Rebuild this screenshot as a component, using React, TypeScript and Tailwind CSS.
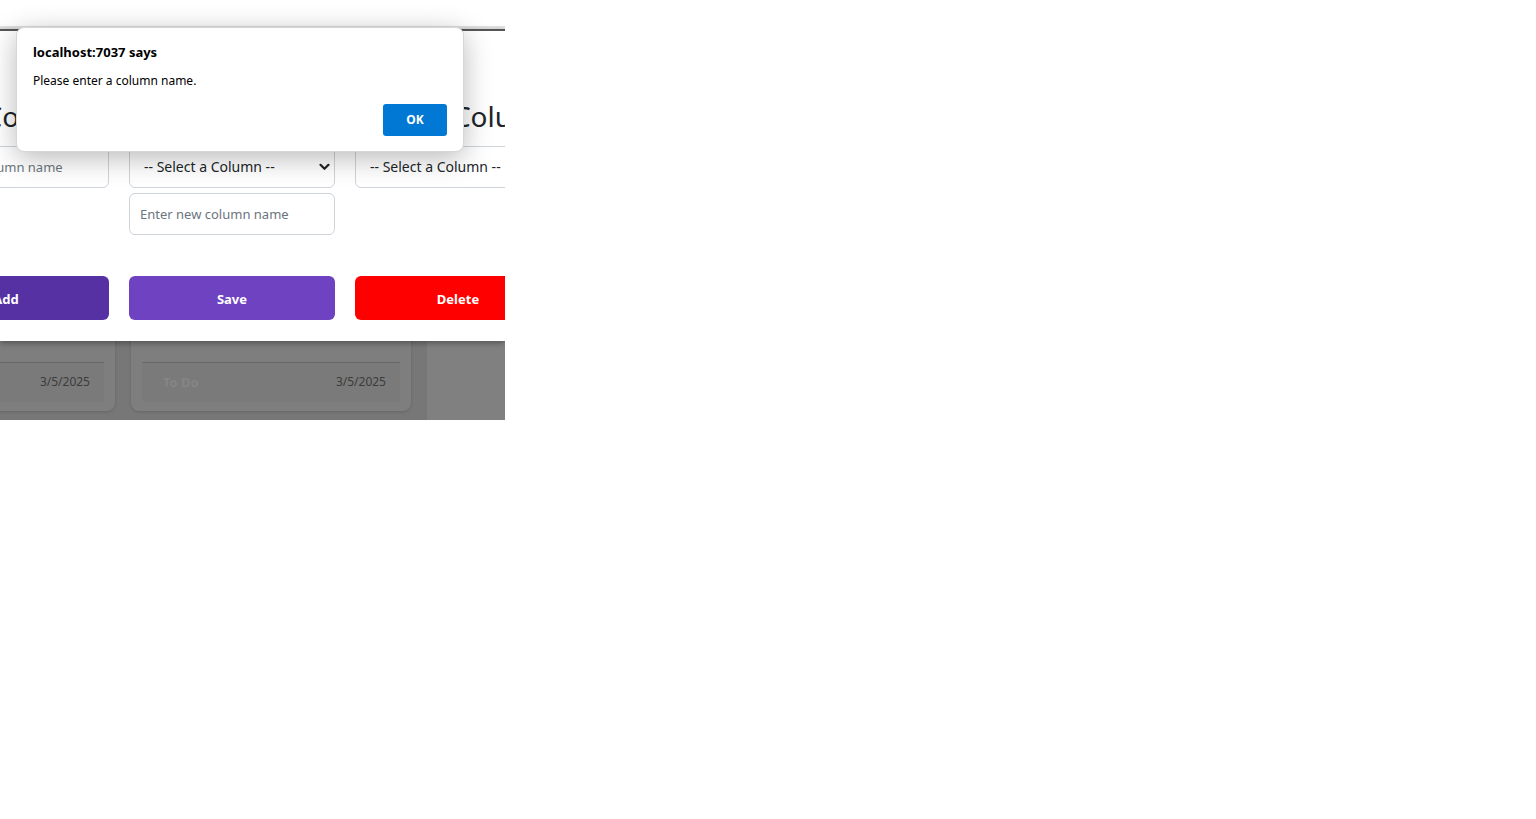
import React from 'react';

const font = { fontFamily: '"Noto Sans", "Open Sans", Arial, sans-serif' };

function Chevron() {
  return (
    <svg width="11" height="8" viewBox="0 0 11 8" className="shrink-0">
      <path d="M1.5 1.8 L5.5 5.8 L9.5 1.8" fill="none" stroke="#222" strokeWidth="2.2" strokeLinecap="round" strokeLinejoin="round" />
    </svg>
  );
}

function Card() {
  return (
    <div className="self-end mb-[9px] w-[280px] h-[150px] shrink-0 rounded-lg bg-[#7e7e7e] shadow-[0_1px_3px_rgba(0,0,0,0.15)] flex flex-col justify-end px-[11px] pb-[9px]">
      <div className="h-[40px] border-t border-[#686868] bg-[#7a7a7a] rounded-b flex items-center justify-between pl-[21px] pr-[14px]">
        <span className="text-[13px] font-bold text-[#858585]">To Do</span>
        <span className="text-[12px] text-[#3c3c3c] -mt-[2px]">3/5/2025</span>
      </div>
    </div>
  );
}

function SelectBox() {
  return (
    <div className="h-[42px] rounded-md border border-[#ced4da] flex items-center justify-between pl-[14px] pr-[4px] text-[14px] text-[#212529]">
      <span className="-mt-[1px]">-- Select a Column --</span>
      <Chevron />
    </div>
  );
}

function TextBox() {
  return (
    <input
      placeholder="Enter new column name"
      className="h-[42px] rounded-md border border-[#ced4da] pl-[10px] text-[13px] text-[#212529] placeholder:text-[#6c757d] outline-none"
    />
  );
}

export default function App() {
  return (
    <div className="bg-white min-h-screen" style={font}>
      <div className="relative w-[505px] h-[420px] overflow-hidden bg-[#777777]">
        {/* board behind the overlay */}
        <div className="flex h-full gap-4 -ml-[165px]">
          <Card />
          <Card />
          <div className="w-[300px] shrink-0 bg-[#808080]" />
        </div>

        {/* white strip above modal */}
        <div className="absolute left-0 top-0 w-full h-[26px] bg-white" />
        <div className="absolute left-0 top-[26px] w-full h-[3px] bg-[#e4e4e4]" />

        {/* app modal */}
        <div className="absolute left-0 top-[29px] w-full h-[312px] bg-white border-t-2 border-[#555] shadow-[0_2px_6px_rgba(0,0,0,0.35)]">
          <div className="grid grid-cols-[206px_206px_206px] gap-x-5 -ml-[97px] pt-[68px]">
            {['Add Column', 'Rename Column', 'Delete Column'].map((t) => (
              <h2 key={t} className="text-center text-[28px] leading-[34px] text-[#212529] font-normal whitespace-nowrap">
                {t}
              </h2>
            ))}
          </div>
          <div className="grid grid-cols-[206px_206px_206px] gap-x-5 -ml-[97px] mt-[13px]">
            <div className="flex flex-col">
              <TextBox />
            </div>
            <div className="flex flex-col gap-[5px]">
              <SelectBox />
              <TextBox />
            </div>
            <div className="flex flex-col">
              <SelectBox />
            </div>
          </div>
          <div className="grid grid-cols-[206px_206px_206px] gap-x-5 -ml-[97px] mt-[41px]">
            <button className="h-[44px] pt-[3px] rounded-md bg-[#5631a4] text-white text-[13px] font-bold">Add</button>
            <button className="h-[44px] pt-[3px] rounded-md bg-[#6f42c1] text-white text-[13px] font-bold">Save</button>
            <button className="h-[44px] pt-[3px] rounded-md bg-[#ff0000] text-white text-[13px] font-bold">Delete</button>
          </div>
        </div>

        {/* browser alert */}
        <div className="absolute left-[16px] top-[27px] w-[448px] h-[125px] bg-white rounded-lg border border-[#d6d6d6] shadow-[0_6px_28px_rgba(0,0,0,0.28)] px-4 pt-[15px]">
          <div className="text-[13px] font-bold text-black leading-[18px]">localhost:7037 says</div>
          <div className="text-[12px] text-black leading-[16px] mt-[12px]">Please enter a column name.</div>
          <div className="flex justify-end mt-[15px]">
            <button className="w-[64px] h-[32px] rounded-[3px] bg-[#0078d4] text-white text-[12px] font-bold">OK</button>
          </div>
        </div>
      </div>
    </div>
  );
}
